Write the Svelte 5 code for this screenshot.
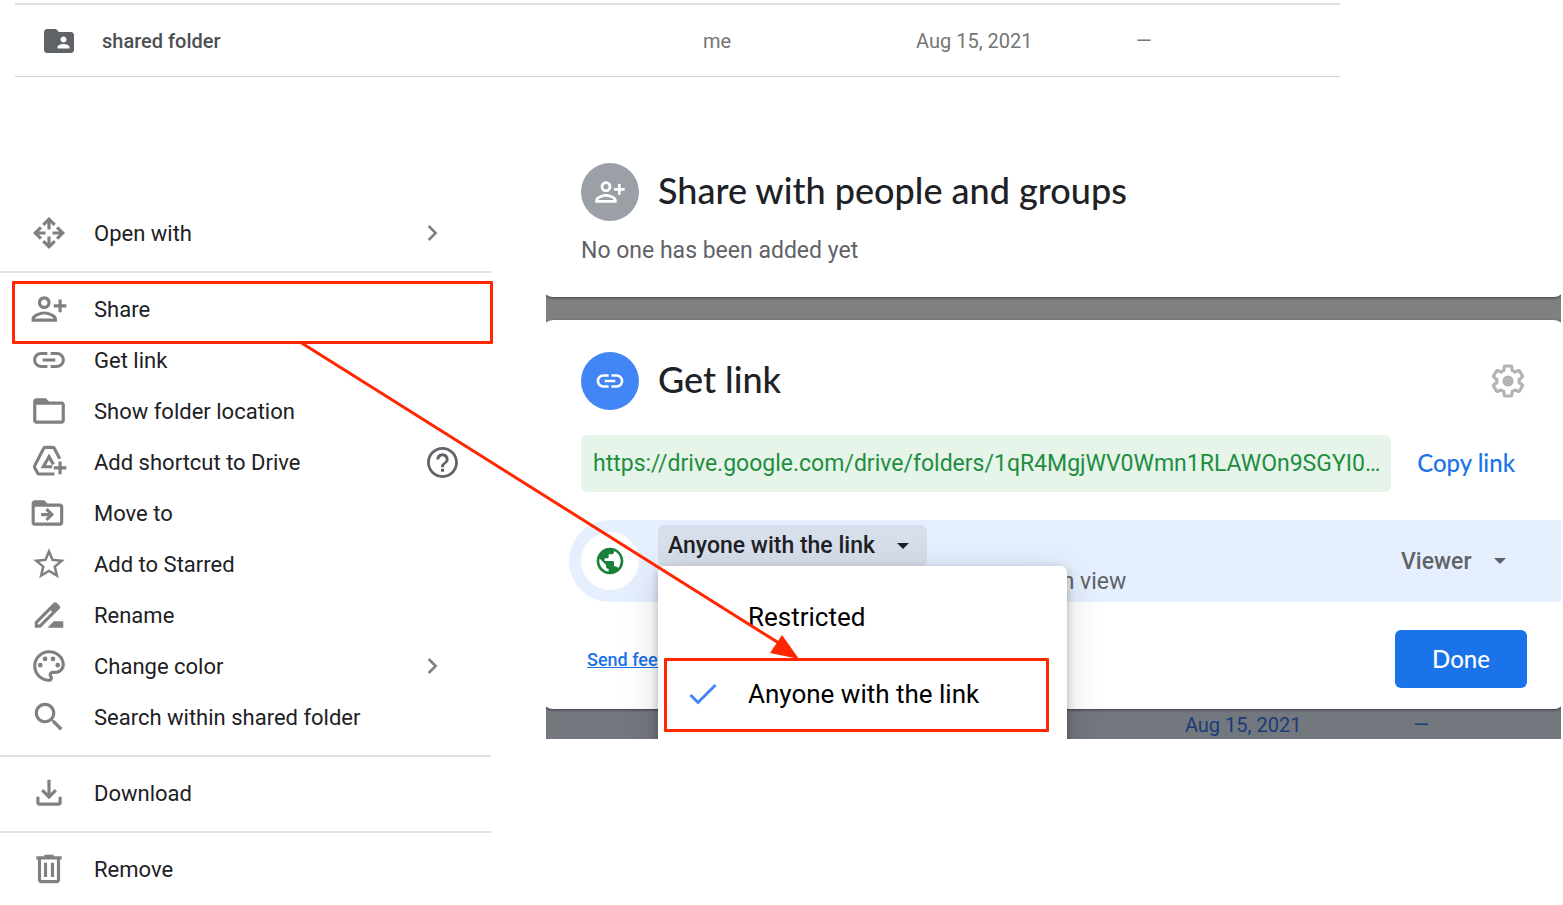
<script>
  const person =
    'M13 8c0-2.21-1.79-4-4-4S5 5.79 5 8s1.79 4 4 4 4-1.79 4-4zm-2 0c0 1.1-.9 2-2 2s-2-.9-2-2 .9-2 2-2 2 .9 2 2zM1 18v2h16v-2c0-2.66-5.33-4.5-8-4.5S1 15.34 1 18zm2 0c.2-.71 3.3-2.5 6-2.5 2.69 0 5.78 1.78 6 2.5H3zM20 14v-3h3V9h-3V6h-2v3h-3v2h3v3z';
  const link =
    'M3.9 12c0-1.71 1.39-3.1 3.1-3.1h4V7H7c-2.76 0-5 2.24-5 5s2.24 5 5 5h4v-1.9H7c-1.71 0-3.1-1.39-3.1-3.1zM8 13h8v-2H8v2zm9-6h-4v1.9h4c1.71 0 3.1 1.39 3.1 3.1s-1.39 3.1-3.1 3.1h-4V17h4c2.76 0 5-2.24 5-5s-2.24-5-5-5z';
  const folder =
    'M20 6h-8l-2-2H4c-1.1 0-1.99.9-1.99 2L2 18c0 1.1.9 2 2 2h16c1.1 0 2-.9 2-2V8c0-1.1-.9-2-2-2zm0 12H4V8h16v10z';

  // fill: solid outlines, line: open strokes two units wide
  const groups = [
    [
      {
        label: 'Open with',
        line: 'M12 9.8V3.6M8.4 6.9 12 3.3l3.6 3.6M12 14.2v6.2M8.4 17.1l3.6 3.6 3.6-3.6M9.8 12H3.6M6.9 8.4 3.3 12l3.6 3.6M14.2 12h6.2M17.1 8.4l3.6 3.6-3.6 3.6',
        end: 'more'
      }
    ],
    [
      { label: 'Share', fill: person, marked: true },
      { label: 'Get link', fill: link },
      { label: 'Show folder location', fill: folder },
      {
        label: 'Add shortcut to Drive',
        line: 'M15.4 19.6H5.8a1 1 0 0 1-.9-.5L2.9 15.5a1 1 0 0 1 0-1L8.6 3.4a1 1 0 0 1 .9-.6h5a1 1 0 0 1 .9.6l3.4 6.6M14 15H8.4L12 8.6l2.8 5M19 11.7v8M15 15.7h8',
        end: 'help'
      },
      {
        label: 'Move to',
        fill: 'M19 6h-8L9 4H3c-1.1 0-1.99.9-1.99 2L1 18c0 1.1.9 2 2 2h16c1.1 0 2-.9 2-2V8c0-1.1-.9-2-2-2zm0 12H3V8h16v10z',
        line: 'M7 13h6.4M10.4 9.6l3.4 3.4-3.4 3.4'
      },
      {
        label: 'Add to Starred',
        fill: 'M22 9.24l-7.19-.62L12 2 9.19 8.63 2 9.24l5.46 4.73L5.82 21 12 17.27 18.18 21l-1.63-7.03L22 9.24zM12 15.4l-3.76 2.27 1-4.28-3.32-2.88 4.38-.38L12 6.1l1.71 4.04 4.38.38-3.32 2.88 1 4.28L12 15.4z'
      },
      {
        label: 'Rename',
        fill: 'M15 16l-4 4h10v-4zM12.56 6.69L3 16.25V20h3.75l9.56-9.56zM5.92 18H5v-.92l8.06-8.06.92.92L5.92 18zM18.71 8.04c.5-.5.5-1.4 0-1.91l-1.84-1.84c-.5-.5-1.4-.5-1.91 0l-2.6 2.6 3.75 3.75z'
      },
      {
        label: 'Change color',
        fill: 'M12 22C6.49 22 2 17.51 2 12S6.49 2 12 2s10 4.04 10 9c0 3.31-2.69 6-6 6h-1.77c-.28 0-.5.22-.5.5 0 .12.05.23.13.33.41.47.64 1.06.64 1.67 0 1.38-1.12 2.5-2.5 2.5zm0-18c-4.41 0-8 3.59-8 8s3.59 8 8 8c.28 0 .5-.22.5-.5 0-.16-.08-.28-.14-.35-.41-.46-.63-1.05-.63-1.65 0-1.38 1.12-2.5 2.5-2.5H16c2.21 0 4-1.79 4-4 0-3.86-3.59-7-8-7zM8 11.5a1.5 1.5 0 1 1-3 0 1.5 1.5 0 0 1 3 0zM11 7.5a1.5 1.5 0 1 1-3 0 1.5 1.5 0 0 1 3 0zM16 7.5a1.5 1.5 0 1 1-3 0 1.5 1.5 0 0 1 3 0zM19 11.5a1.5 1.5 0 1 1-3 0 1.5 1.5 0 0 1 3 0z',
        end: 'more'
      },
      {
        label: 'Search within shared folder',
        fill: 'M15.5 14h-.79l-.28-.27C15.41 12.59 16 11.11 16 9.5 16 5.91 13.09 3 9.5 3S3 5.91 3 9.5 5.91 16 9.5 16c1.61 0 3.09-.59 4.23-1.57l.27.28v.79l5 4.99L20.49 19l-4.99-5zm-6 0C7.01 14 5 11.99 5 9.5S7.01 5 9.5 5 14 7.01 14 9.5 11.99 14 9.5 14z'
      }
    ],
    [
      {
        label: 'Download',
        line: 'M12 3.6v11M7.7 10.2l4.3 4.3 4.3-4.3M5 14.4V18a1 1 0 0 0 1 1h12a1 1 0 0 0 1-1v-3.6'
      }
    ],
    [
      {
        label: 'Remove',
        fill: 'M15 4V3H9v1H4v2h1v13c0 1.1.9 2 2 2h10c1.1 0 2-.9 2-2V6h1V4h-5zm2 15H7V6h10v13zM8.8 8h2v9h-2zM13.2 8h2v9h-2z'
      }
    ]
  ];
</script>

{#snippet icon(fill, line)}
  <svg class="icon" viewBox="0 0 24 24" aria-hidden="true">
    {#if fill}<path d={fill} fill="currentColor" />{/if}
    {#if line}<path d={line} fill="none" stroke="currentColor" stroke-width="2" />{/if}
  </svg>
{/snippet}

<div class="page">
  <table class="files">
    <colgroup>
      <col />
      <col class="owner" />
      <col class="date" />
      <col class="size" />
    </colgroup>
    <tbody>
      <tr>
        <td>
          <div class="name">
            <svg viewBox="0 0 24 24" aria-hidden="true">
              <path
                fill="currentColor"
                d="M20 6h-8l-2-2H4c-1.1 0-1.99.9-1.99 2L2 18c0 1.1.9 2 2 2h16c1.1 0 2-.9 2-2V8c0-1.1-.9-2-2-2zm-5 3c1.1 0 2 .9 2 2s-.9 2-2 2-2-.9-2-2 .9-2 2-2zm4 8h-8v-1c0-1.33 2.67-2 4-2s4 .67 4 2v1z"
              />
            </svg>
            <span>shared folder</span>
          </div>
        </td>
        <td>me</td>
        <td>Aug 15, 2021</td>
        <td>—</td>
      </tr>
    </tbody>
  </table>

  <main>
    <nav class="menu">
      {#each groups as group}
        <div class="group">
          {#each group as item}
            <button class="item" class:marked={item.marked}>
              {@render icon(item.fill, item.line)}
              <span class="label">{item.label}</span>
              {#if item.end === 'more'}
                <svg class="more" viewBox="0 0 24 24" aria-hidden="true">
                  <path d="M4 6l6 6-6 6" fill="none" stroke="currentColor" stroke-width="2.2" />
                </svg>
              {:else if item.end === 'help'}
                <svg class="help" viewBox="0 0 24 24" aria-hidden="true">
                  <path
                    fill="currentColor"
                    d="M11 18h2v-2h-2v2zm1-16C6.48 2 2 6.48 2 12s4.48 10 10 10 10-4.48 10-10S17.52 2 12 2zm0 18.2c-4.52 0-8.2-3.68-8.2-8.2s3.68-8.2 8.2-8.2 8.2 3.68 8.2 8.2-3.68 8.2-8.2 8.2zm0-14.2c-2.21 0-4 1.79-4 4h1.9c0-1.15.95-2.1 2.1-2.1s2.1.95 2.1 2.1c0 2-3.05 1.75-3.05 5h1.9c0-2.25 3.05-2.5 3.05-5 0-2.21-1.79-4-4-4z"
                  />
                </svg>
              {/if}
            </button>
          {/each}
        </div>
      {/each}
    </nav>

    <div class="dialogs">
      <section class="card people">
        <header>
          <span class="badge grey">
            <svg viewBox="0 0 24 24" aria-hidden="true"><path d={person} fill="currentColor" /></svg>
          </span>
          <h2>Share with people and groups</h2>
        </header>
        <p>No one has been added yet</p>
      </section>

      <section class="card getlink">
        <header>
          <span class="badge blue">
            <svg viewBox="0 0 24 24" aria-hidden="true"><path d={link} fill="currentColor" /></svg>
          </span>
          <h2>Get link</h2>
          <button class="gear" aria-label="Settings">
            <svg viewBox="0 0 24 24" aria-hidden="true">
              <path
                d="M19.43 12.98c.04-.32.07-.64.07-.98 0-.34-.03-.66-.07-.98l2.11-1.65c.19-.15.24-.42.12-.64l-2-3.46c-.09-.16-.26-.25-.44-.25-.06 0-.12.01-.17.03l-2.49 1c-.52-.4-1.08-.73-1.69-.98l-.38-2.65C14.46 2.18 14.25 2 14 2h-4c-.25 0-.46.18-.49.42l-.38 2.65c-.61.25-1.17.59-1.69.98l-2.49-1c-.06-.02-.12-.03-.18-.03-.17 0-.34.09-.43.25l-2 3.46c-.13.22-.07.49.12.64l2.11 1.65c-.04.32-.07.65-.07.98 0 .33.03.66.07.98l-2.11 1.65c-.19.15-.24.42-.12.64l2 3.46c.09.16.26.25.44.25.06 0 .12-.01.17-.03l2.49-1c.52.4 1.08.73 1.69.98l.38 2.65c.03.24.24.42.49.42h4c.25 0 .46-.18.49-.42l.38-2.65c.61-.25 1.17-.59 1.69-.98l2.49 1c.06.02.12.03.18.03.17 0 .34-.09.43-.25l2-3.46c.12-.22.07-.49-.12-.64l-2.11-1.65z"
                fill="none"
                stroke="currentColor"
                stroke-width="2.1"
              />
              <circle cx="12" cy="12" r="3.7" fill="currentColor" />
            </svg>
          </button>
        </header>

        <div class="urlrow">
          <input
            type="text"
            readonly
            aria-label="Link"
            value="https://drive.google.com/drive/folders/1qR4MgjWV0Wmn1RLAWOn9SGYI0…"
          />
          <button class="copy">Copy link</button>
        </div>

        <div class="access">
          <span class="badge white">
            <svg viewBox="0 0 24 24" aria-hidden="true">
              <path
                fill="currentColor"
                d="M12 2C6.48 2 2 6.48 2 12s4.48 10 10 10 10-4.48 10-10S17.52 2 12 2zm-1 17.93c-3.95-.49-7-3.85-7-7.93 0-.62.08-1.21.21-1.79L9 15v1c0 1.1.9 2 2 2v1.93zm6.9-2.54c-.26-.81-1-1.39-1.9-1.39h-1v-3c0-.55-.45-1-1-1H8v-2h2c.55 0 1-.45 1-1V7h2c1.1 0 2-.9 2-2v-.41c2.93 1.19 5 4.06 5 7.41 0 2.08-.8 3.97-2.1 5.39z"
              />
            </svg>
          </span>
          <div class="scope">
            <button class="trigger" aria-haspopup="listbox" aria-expanded="true">
              Anyone with the link
              <svg viewBox="0 0 12 6" aria-hidden="true"><path d="M0 0h12L6 6z" fill="currentColor" /></svg>
            </button>
            <p>Anyone on the internet with this link can view</p>
            <div class="popup" role="listbox" aria-label="Link access">
              <button class="option" role="option" aria-selected="false">
                <span class="tick"></span>Restricted
              </button>
              <button class="option marked" role="option" aria-selected="true">
                <span class="tick">
                  <svg viewBox="0 0 28 22" aria-hidden="true">
                    <path d="M1.5 12l7.5 7.5L26.5 2" fill="none" stroke="currentColor" stroke-width="3" />
                  </svg>
                </span>Anyone with the link
              </button>
            </div>
          </div>
          <label class="role">
            <select aria-label="Role">
              <option>Viewer</option>
            </select>
            <svg viewBox="0 0 12 6" aria-hidden="true"><path d="M0 0h12L6 6z" fill="currentColor" /></svg>
          </label>
        </div>

        <footer>
          <a href="#feedback">Send feedback to Google</a>
          <button class="done">Done</button>
        </footer>
      </section>

      <div class="behind">
        <span>Aug 15, 2021</span>
        <span>—</span>
      </div>
    </div>
  </main>

  <svg class="arrow" viewBox="0 0 500 320" aria-hidden="true">
    <path d="M0 0 482 303" fill="none" stroke="#ff2600" stroke-width="3" />
    <path d="M499 317 482 293 470 311z" fill="#ff2600" />
  </svg>
</div>

<style>
  :global(body) {
    margin: 0;
    background: #fff;
  }

  .page {
    position: relative;
    padding-top: 3px;
    overflow-x: hidden;
    font-family: Roboto, 'Liberation Sans', sans-serif;
    font-size: 22px;
    color: #202124;
  }

  button,
  input,
  select {
    font: inherit;
    color: inherit;
    border: 0;
    padding: 0;
    margin: 0;
    background: none;
  }

  svg {
    display: block;
    flex: none;
  }

  .files {
    width: calc(100% - 238px);
    margin-left: 15px;
    table-layout: fixed;
    border-collapse: separate;
    border-spacing: 0;
    border-top: 2px solid #e0e0e4;
    border-bottom: 1px solid #d4d4d6;
    font-size: 20px;
    color: #757575;
  }

  .files td {
    height: 71px;
    padding: 0;
  }

  .owner {
    width: 213px;
  }

  .date {
    width: 220px;
  }

  .size {
    width: 204px;
  }

  .name {
    display: flex;
    align-items: center;
    gap: 25px;
    padding-left: 26px;
    font-weight: 500;
    color: #4d4f52;
  }

  .name svg {
    width: 36px;
    height: 36px;
    color: #5f6368;
  }

  main {
    display: flex;
    align-items: flex-start;
    gap: 55px;
    padding: 54px 2px 0 0;
  }

  .menu {
    flex: none;
    width: 491px;
    padding-top: 77px;
  }

  .group + .group {
    margin-top: 12px;
    padding-top: 11px;
    border-top: 2px solid #e0e1e4;
  }

  .item {
    position: relative;
    display: flex;
    align-items: center;
    gap: 26px;
    width: 100%;
    height: 51px;
    padding: 0 31px 0 30px;
    text-align: left;
  }

  .item svg {
    margin-bottom: 1px;
  }

  .label {
    flex: 1;
  }

  .icon {
    width: 38px;
    height: 38px;
    color: #808080;
  }

  .more {
    width: 28px;
    height: 28px;
    margin-right: 8px;
    color: #808080;
  }

  .help {
    width: 37px;
    height: 37px;
    margin-right: -1px;
    color: #5f6368;
  }

  .item.marked::after {
    content: '';
    position: absolute;
    inset: -3px -2px -9px 12px;
    border: 3px solid #ff2600;
    border-radius: 1px;
  }

  .dialogs {
    flex: 1;
    min-width: 0;
    overflow: hidden;
    background: linear-gradient(#fff 100px, #808080 100px, #808080 400px, #73777e 400px);
  }

  .card {
    margin: 0 -4px;
    background: #fff;
    box-shadow: 0 1px 3px rgba(0, 0, 0, 0.5);
  }

  .people {
    padding: 32px 39px 30px;
    border-radius: 0 0 11px 11px;
  }

  .people p {
    margin: 14px 0 0;
    line-height: 32px;
    font-size: 23px;
    color: #5f6368;
  }

  header {
    display: flex;
    align-items: center;
    gap: 19px;
  }

  h2 {
    flex: 1;
    margin: 0;
    padding-bottom: 4px;
    font-family: Lato, Roboto, sans-serif;
    font-size: 36px;
    font-weight: 500;
    line-height: 44px;
  }

  .badge {
    display: grid;
    place-items: center;
    flex: none;
    width: 58px;
    height: 58px;
    border-radius: 50%;
    color: #fff;
  }

  .badge svg {
    width: 32px;
    height: 32px;
  }

  .grey {
    background: #9aa0a6;
  }

  .blue {
    background: #4285f4;
  }

  .white {
    background: #fff;
    color: #188038;
  }

  .getlink {
    margin-top: 23px;
    padding: 32px 0 21px 39px;
    border-radius: 11px;
    font-size: 23px;
  }

  .gear {
    margin-right: 39px;
    color: #b3b3b3;
  }

  .gear svg {
    width: 36px;
    height: 36px;
  }

  .urlrow {
    display: flex;
    align-items: center;
    gap: 26px;
    margin-top: 25px;
    padding-right: 50px;
  }

  .urlrow input {
    flex: 1;
    min-width: 0;
    height: 57px;
    box-sizing: border-box;
    padding: 0 0 0 12px;
    border-radius: 6px;
    background: #e6f4ea;
    color: #1e8e3e;
  }

  .copy,
  .done {
    padding-bottom: 2px;
    font-family: Lato, Roboto, sans-serif;
    font-size: 24px;
    font-weight: 500;
  }

  .copy {
    color: #1a73e8;
  }

  .access {
    display: flex;
    align-items: center;
    gap: 19px;
    height: 82px;
    margin: 28px 0 0 -12px;
    padding-left: 12px;
    border-radius: 41px 0 0 41px;
    background: #e6effe;
    color: #5f6368;
  }

  .scope {
    position: relative;
    flex: 1;
    height: 72px;
  }

  .trigger {
    display: flex;
    align-items: center;
    gap: 22px;
    height: 41px;
    padding: 0 18px 0 10px;
    border-radius: 6px;
    background: #d8dfec;
    color: #202124;
    font-weight: 500;
  }

  .trigger svg,
  .role svg {
    width: 12px;
    height: 6px;
  }

  .scope p {
    margin: 0;
    padding-left: 10px;
    line-height: 32px;
    white-space: nowrap;
  }

  .popup {
    position: absolute;
    top: 41px;
    left: 0;
    z-index: 1;
    width: 409px;
    height: 240px;
    padding-top: 12px;
    box-sizing: border-box;
    border-radius: 6px;
    background: #fff;
    box-shadow:
      0 3px 8px rgba(0, 0, 0, 0.25),
      0 8px 40px rgba(0, 0, 0, 0.14);
  }

  .option {
    position: relative;
    display: flex;
    align-items: center;
    width: 100%;
    height: 77px;
    font-size: 26px;
    color: #000;
  }

  .tick {
    width: 59px;
    padding-left: 31px;
    color: #4285f4;
  }

  .tick svg {
    width: 28px;
    height: 22px;
  }

  .option.marked::after {
    content: '';
    position: absolute;
    inset: 3px 18px 0 6px;
    border: 3px solid #ff2600;
    border-radius: 1px;
  }

  .role {
    display: flex;
    align-items: center;
    gap: 22px;
    margin-right: 59px;
    font-weight: 500;
  }

  .role select {
    appearance: none;
  }

  footer {
    display: flex;
    align-items: center;
    justify-content: space-between;
    margin-top: 28px;
    padding: 0 38px 0 6px;
  }

  footer a {
    font-size: 18px;
    font-weight: 500;
    color: #1a73e8;
  }

  .done {
    width: 132px;
    height: 58px;
    border-radius: 6px;
    background: #1a73e8;
    color: #fff;
  }

  .behind {
    display: flex;
    justify-content: flex-end;
    gap: 112px;
    height: 30px;
    padding-right: 132px;
    line-height: 32px;
    font-size: 20px;
    color: #1a3c78;
  }

  .arrow {
    position: absolute;
    top: 342px;
    left: 300px;
    z-index: 2;
    width: 500px;
    height: 320px;
    pointer-events: none;
  }
</style>
